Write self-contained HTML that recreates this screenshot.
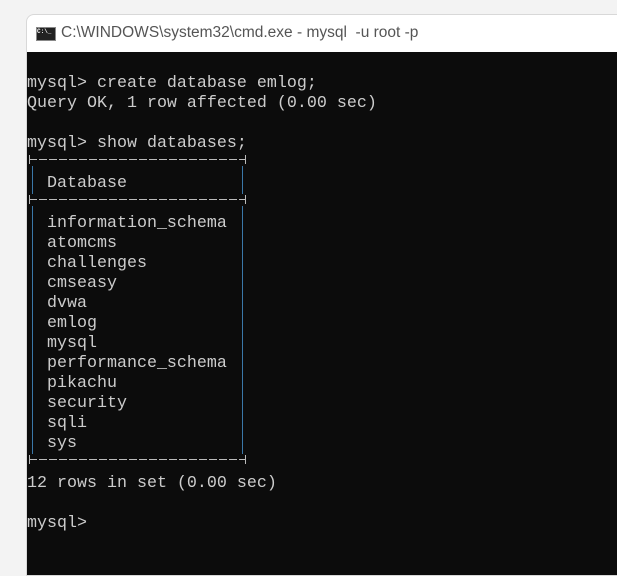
<!DOCTYPE html><html><head><style>
body{margin:0;width:617px;height:563px;background:#f3f3f3;position:relative;overflow:hidden;font-family:"Liberation Sans",sans-serif}
.win{position:absolute;left:26px;top:14px;width:600px;height:560px;background:#fff;border:1px solid #d8d8d8;border-radius:8px 0 0 0;overflow:hidden}
.title{position:absolute;left:34px;top:9px;font-size:15.5px;color:#555;white-space:pre}
.icon{position:absolute;left:9px;top:12px;width:18px;height:12px;background:#222;border:1px solid #888;font:bold 6px "Liberation Mono",monospace;color:#fff;line-height:8px;overflow:hidden}
.term{position:absolute;left:0;top:37px;right:0;bottom:0;background:#0c0c0c}
pre{position:absolute;left:0;top:22px;margin:0;font-family:"Liberation Mono",monospace;font-size:16.67px;line-height:20px;color:#cccccc}
.h{position:absolute;left:2px;width:216px;height:1px;background:repeating-linear-gradient(90deg,#bbb 0 8px,transparent 8px 10px)}
.v{position:absolute;width:1px;background:#3b78a8}
.p{position:absolute;width:1px;height:9px;background:#bbb}
</style></head><body>
<div class="win">
<div class="icon">C:\_</div>
<div class="title">C:\WINDOWS\system32\cmd.exe - mysql  -u root -p</div>
<div class="term">
<pre>mysql&gt; create database emlog;
Query OK, 1 row affected (0.00 sec)

mysql&gt; show databases;

  Database

  information_schema
  atomcms
  challenges
  cmseasy
  dvwa
  emlog
  mysql
  performance_schema
  pikachu
  security
  sqli
  sys

12 rows in set (0.00 sec)

mysql&gt;</pre>
<div class="h" style="top:107px"></div>
<div class="h" style="top:147px"></div>
<div class="h" style="top:407px"></div>
<div class="p" style="left:2px;top:103px"></div><div class="p" style="left:218px;top:103px"></div>
<div class="p" style="left:2px;top:143px"></div><div class="p" style="left:218px;top:143px"></div>
<div class="p" style="left:2px;top:403px"></div><div class="p" style="left:218px;top:403px"></div>
<div class="v" style="left:5px;top:114px;height:28px"></div>
<div class="v" style="left:215px;top:114px;height:28px"></div>
<div class="v" style="left:5px;top:154px;height:248px"></div>
<div class="v" style="left:215px;top:154px;height:248px"></div>
</div></div>
</body></html>
